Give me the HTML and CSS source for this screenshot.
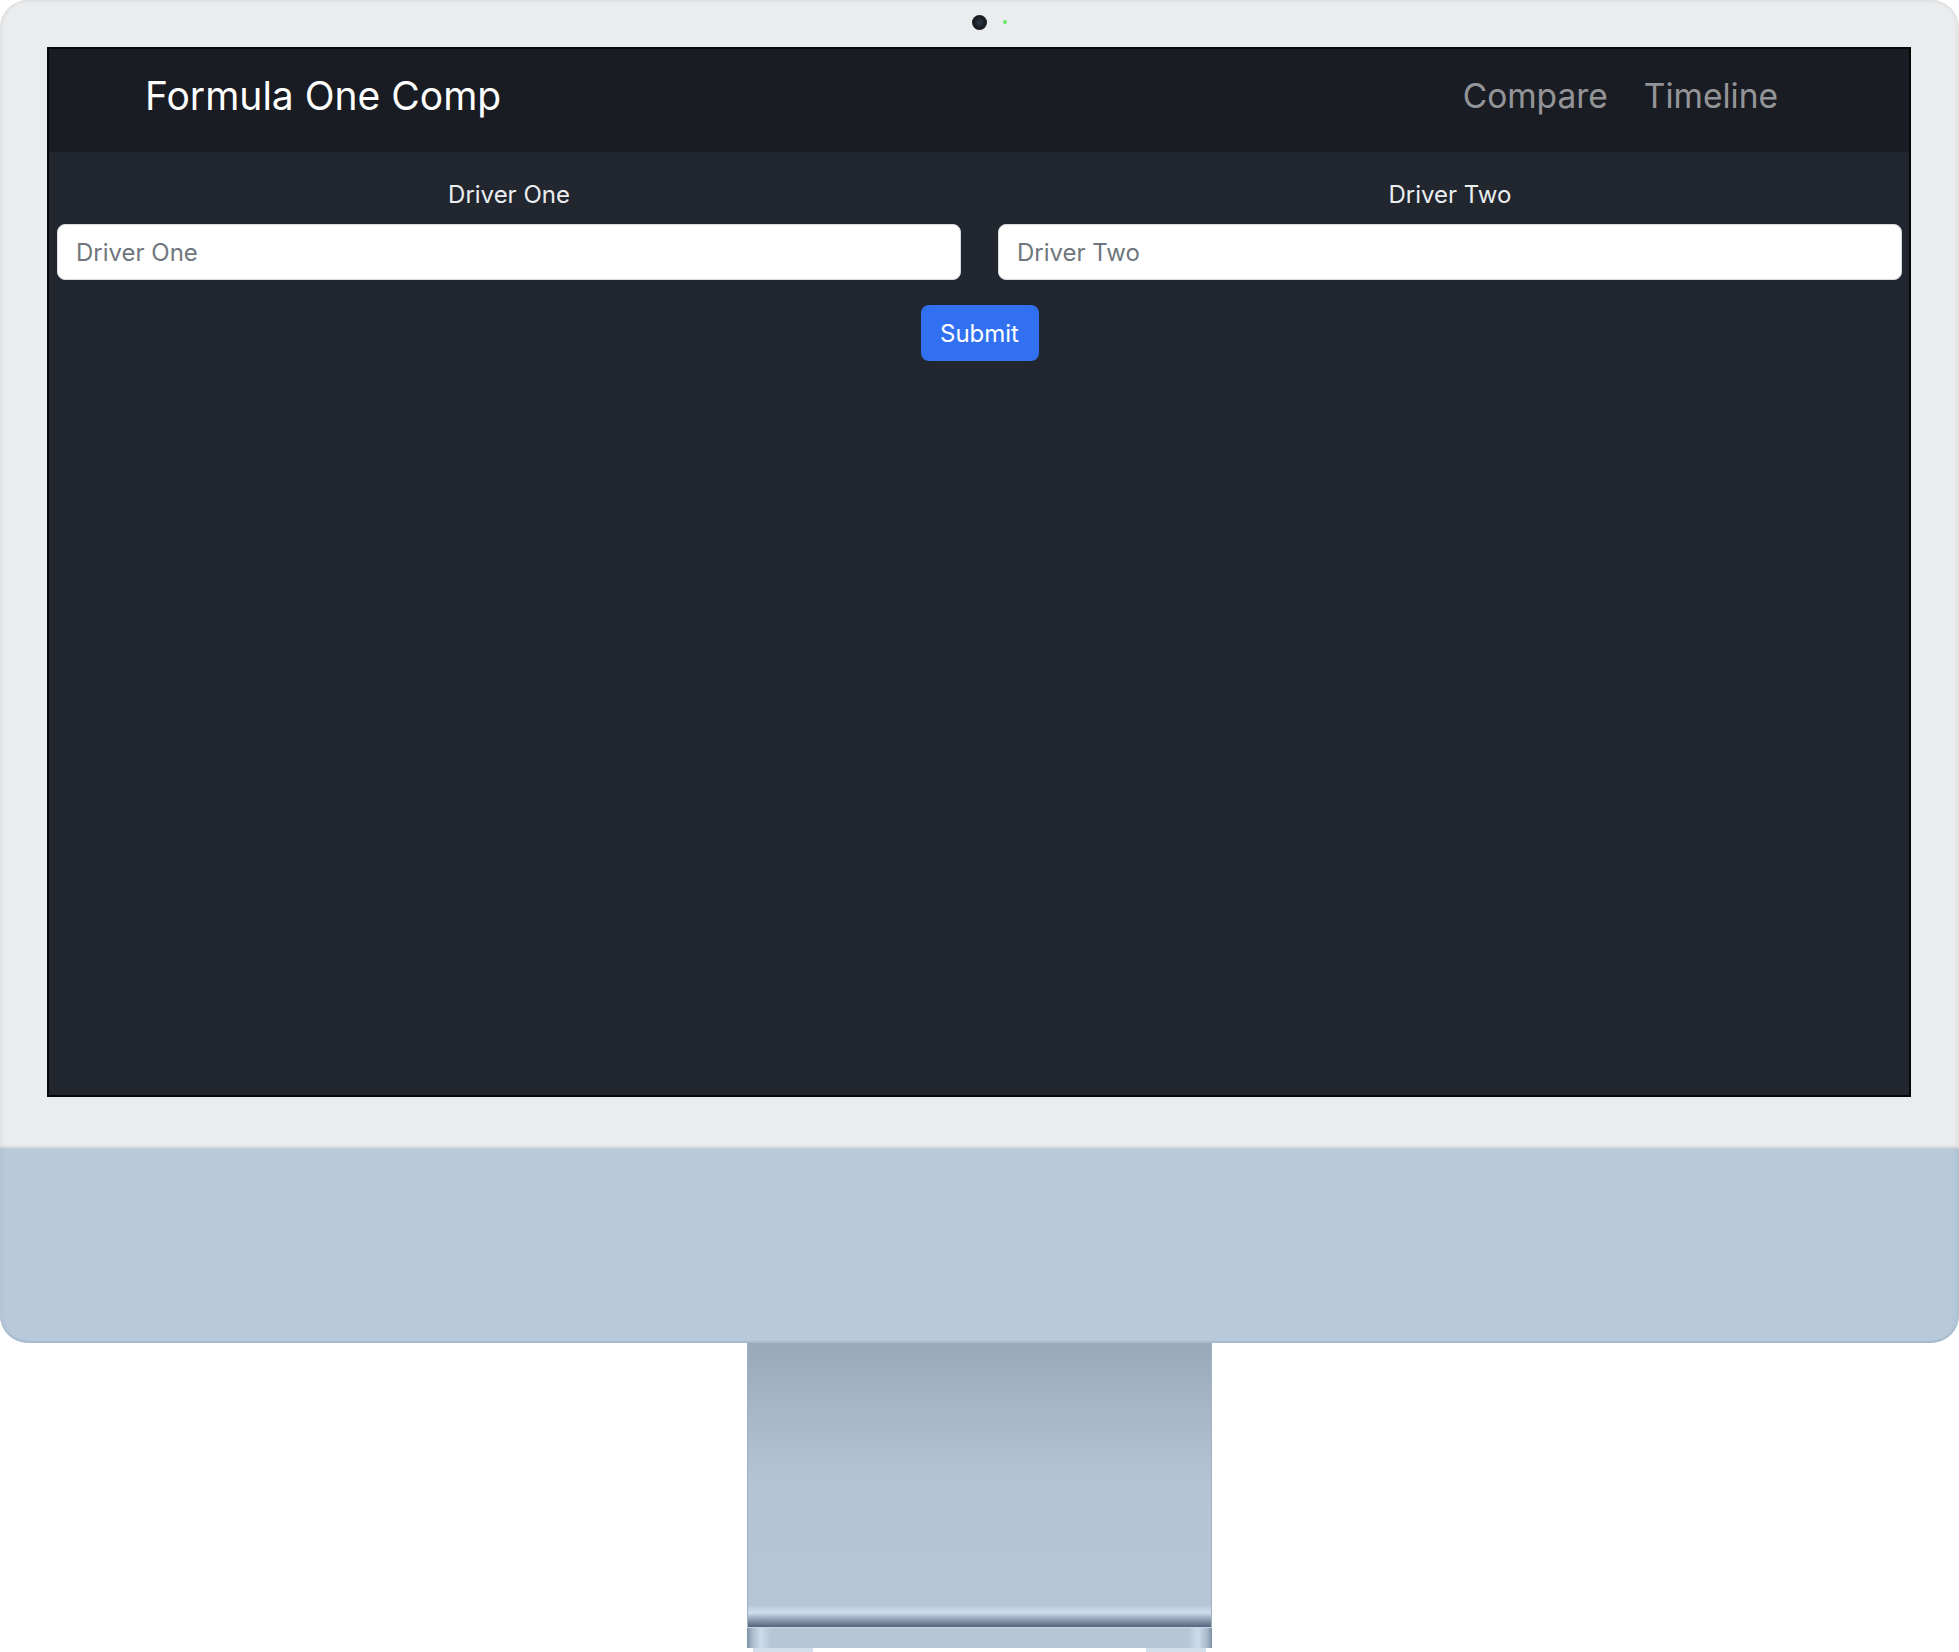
FILE: index.html
```html
<!DOCTYPE html>
<html lang="en">
<head>
<meta charset="utf-8">
<title>Formula One Comp</title>
<link rel="stylesheet" href="styles.css">
</head>
<body>
<div class="imac">
  <div class="display">
    <div class="bezel">
      <div class="cam-row">
        <span></span>
        <span class="camera"></span>
        <span class="led"></span>
      </div>
      <div class="screen">
        <nav class="navbar">
          <a class="brand" href="#">Formula One Comp</a>
          <ul class="nav">
            <li><a class="nav-link" href="#">Compare</a></li>
            <li><a class="nav-link" href="#">Timeline</a></li>
          </ul>
        </nav>
        <main class="content">
          <form class="compare-form">
            <div class="fields">
              <div class="field">
                <label class="field-label" for="d1">Driver One</label>
                <input class="field-input" id="d1" type="text" placeholder="Driver One">
              </div>
              <div class="field">
                <label class="field-label" for="d2">Driver Two</label>
                <input class="field-input" id="d2" type="text" placeholder="Driver Two">
              </div>
            </div>
            <button class="submit" type="button">Submit</button>
          </form>
        </main>
      </div>
    </div>
    <div class="chin"></div>
  </div>
  <div class="stand"></div>
  <div class="base"></div>
  <div class="feet"><span class="foot"></span><span class="foot"></span></div>
</div>
</body>
</html>
```
FILE: styles.css
```css
* {
  box-sizing: border-box;
}

html, body {
  margin: 0;
  padding: 0;
  background: #ffffff;
}

body {
  font-family: Inter, "Noto Sans", "Liberation Sans", sans-serif;
}

.imac {
  width: 1959px;
  display: flex;
  flex-direction: column;
}

.display {
  width: 1959px;
}

.bezel {
  height: 1147px;
  padding: 0 48px 50px 47px;
  background: #ebecee;
  border-radius: 28px 28px 0 0;
  box-shadow: inset 0 1px 0 #dfe0e3, inset 2px 0 4px rgba(0, 0, 0, 0.05), inset -2px 0 4px rgba(0, 0, 0, 0.05);
  display: flex;
  flex-direction: column;
}

.cam-row {
  height: 47px;
  display: grid;
  grid-template-columns: 1fr 15px 1fr;
  align-items: start;
  padding-top: 15px;
}

.camera {
  width: 15px;
  height: 15px;
  border-radius: 50%;
  background: radial-gradient(circle at 50% 50%, #2c3a4a 0, #1b1f26 45%, #141619 100%);
}

.led {
  width: 4px;
  height: 4px;
  margin-top: 5px;
  margin-left: 16px;
  border-radius: 50%;
  background: #68e86a;
}

.screen {
  height: 1050px;
  border: 2px solid #060708;
  background: #22262e;
  display: flex;
  flex-direction: column;
}

.navbar {
  height: 103px;
  flex: none;
  background: #191c22;
  display: flex;
  align-items: center;
  justify-content: space-between;
  padding: 0 131px 8px 96px;
}

.brand {
  color: #ffffff;
  font-size: 39px;
  font-weight: 400;
  text-decoration: none;
  line-height: 1.2;
}

.nav {
  list-style: none;
  margin: 0;
  padding: 0;
  display: flex;
  gap: 36px;
}

.nav-link {
  color: rgba(255, 255, 255, 0.55);
  font-size: 33.5px;
  text-decoration: none;
  line-height: 1.2;
}

.content {
  flex: 1;
  padding: 25px 7px 0 8px;
}

.compare-form {
  display: flex;
  flex-direction: column;
  align-items: center;
}

.fields {
  width: 100%;
  display: grid;
  grid-template-columns: 1fr 1fr;
  gap: 37px;
}

.field {
  display: flex;
  flex-direction: column;
  align-items: center;
  gap: 12px;
}

.field-label {
  color: #eceef0;
  font-size: 24px;
  line-height: 35px;
}

.field-input {
  width: 100%;
  height: 56px;
  padding: 0 18px;
  border: 1px solid #d7dbe0;
  border-radius: 8px;
  background: #ffffff;
  font-family: inherit;
  font-size: 24px;
  color: #212529;
  outline: none;
}

.field-input::placeholder {
  color: #6f767d;
  opacity: 1;
}

.submit {
  margin-top: 25px;
  width: 118px;
  height: 56px;
  border: none;
  border-radius: 8px;
  background: #3170f0;
  color: #ffffff;
  font-family: inherit;
  font-size: 24px;
  padding: 0;
  cursor: pointer;
}

.chin {
  height: 196px;
  background: linear-gradient(180deg, #d9dde2 0, #b9cadb 3px, #b7c9db 8px, #b7c9db 100%);
  border-radius: 0 0 28px 28px;
  box-shadow: inset 0 -2px 0 #a9bccf, inset 3px 0 5px rgba(0, 0, 0, 0.03), inset -3px 0 5px rgba(0, 0, 0, 0.04);
}

.stand {
  width: 465px;
  height: 284px;
  margin: 0 auto;
  background: linear-gradient(180deg, #97a8b9 0, #a7b7c7 70px, #b4c4d4 140px, #b5c5d5 262px, #c4d4e4 266px, #cddcec 270px, #b0bfd0 273px, #8a9bb0 277px, #6b7b91 281px, #56657b 284px);
  box-shadow: inset 1px 0 0 #a3b2c2, inset -1px 0 0 #a3b2c2;
}

.base {
  width: 465px;
  height: 21px;
  margin: 0 auto;
  background: linear-gradient(90deg, #7f91a7 0, #a8b9cb 5px, #cddcec 14px, #b6c6d6 24px, #b6c6d6 calc(100% - 24px), #cddcec calc(100% - 14px), #a8b9cb calc(100% - 5px), #7f91a7 100%);
  box-shadow: inset 0 1px 0 #c6d5e4;
}

.feet {
  width: 465px;
  height: 4px;
  margin: 0 auto;
  padding: 0 6px;
  display: flex;
  justify-content: space-between;
}

.foot {
  width: 60px;
  height: 4px;
  background: #d2deea;
}
```
